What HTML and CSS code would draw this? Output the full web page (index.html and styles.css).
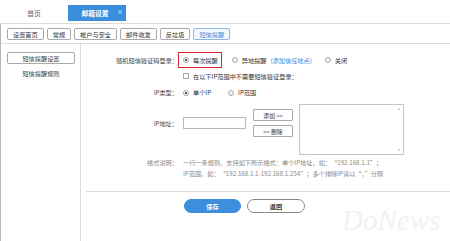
FILE: index.html
```html
<!DOCTYPE html>
<html lang="zh">
<head>
<meta charset="utf-8">
<link rel="stylesheet" href="styles.css">
</head>
<body>
<div class="page">
  <div class="tabs">
    <div class="tab">首页</div>
    <div class="tab active">邮箱设置<span class="close">×</span></div>
  </div>
  <div class="frame">
    <div class="subnav">
      <span class="sbtn">设置首页</span>
      <span class="sbtn">常规</span>
      <span class="sbtn">帐户与安全</span>
      <span class="sbtn">邮件收发</span>
      <span class="sbtn">反垃圾</span>
      <span class="sbtn on">短信提醒</span>
    </div>
    <div class="body">
      <aside class="side">
        <div class="side-btn">短信提醒设置</div>
        <div class="side-link">短信提醒规则</div>
      </aside>
      <main class="main">
        <div class="row r1">
          <div class="lbl">随机短信验证码登录：</div>
          <div class="val">
            <span class="hl"><span class="radio checked"></span>每次提醒</span>
            <span class="opt o2"><span class="radio"></span>异地提醒</span>
            <span class="link">(添加信任地点)</span>
            <span class="opt o3"><span class="radio"></span>关闭</span>
          </div>
        </div>
        <div class="row r2">
          <div class="lbl"></div>
          <div class="val pad"><span class="check"></span>在以下IP范围中不需要短信验证登录：</div>
        </div>
        <div class="row r3">
          <div class="lbl">IP类型：</div>
          <div class="val pad">
            <span class="opt"><span class="radio checked"></span>单个IP</span>
            <span class="opt o4"><span class="radio"></span>IP范围</span>
          </div>
        </div>
        <div class="row r4">
          <div class="lbl ip-lbl">IP地址：</div>
          <div class="val pad ipval">
            <div class="ipinput"></div>
            <div class="ipbtns">
              <div class="smbtn">添加 &gt;&gt;</div>
              <div class="smbtn">&lt;&lt; 删除</div>
            </div>
            <div class="tarea"><div class="sbar"><span class="up"></span><span class="down"></span></div></div>
          </div>
        </div>
        <div class="row r5">
          <div class="lbl">格式说明：</div>
          <div class="val pad note">一行一条规则，支持如下所示格式：单个IP地址，如：“192.168.1.1”；<br>IP范围，如：“192.168.1.1-192.168.1.254”；多个排除IP请以“，”分隔</div>
        </div>
        <div class="sep"></div>
        <div class="actions">
          <span class="btn primary">保存</span>
          <span class="btn">返回</span>
        </div>
        <div class="watermark">DoNews</div>
      </main>
    </div>
  </div>
</div>
</body>
</html>
```
FILE: styles.css
```css
html, body {
  margin: 0;
  padding: 0;
  background: #fff;
}
body {
  width: 450px;
  height: 241px;
  overflow: hidden;
  font-family: "Noto Sans CJK SC", "Liberation Sans", sans-serif;
  font-size: 6.2px;
  color: #333;
}
.page {
  display: flex;
  flex-direction: column;
  height: 241px;
}
.tabs {
  height: 23px;
  border-bottom: 1px solid #dcdcdc;
  display: flex;
  align-items: flex-start;
  box-sizing: content-box;
}
.tab {
  width: 68px;
  height: 16px;
  margin-top: 5px;
  display: flex;
  align-items: center;
  justify-content: center;
  font-size: 6.8px;
  color: #666;
}
.tab.active {
  width: 58px;
  background: #3a8fdc;
  color: #fff;
  font-weight: bold;
  position: relative;
  padding-right: 4px;
  box-sizing: border-box;
}
.close {
  position: absolute;
  right: 3px;
  top: 4px;
  font-size: 6px;
  font-weight: normal;
  line-height: 6px;
}
.frame {
  flex: 1;
  border-left: 1px solid #b5b5b5;
  display: flex;
  flex-direction: column;
}
.subnav {
  border-bottom: 1px solid #dcdcdc;
  display: flex;
  gap: 3px;
  padding: 4px 0 0 6px;
  box-sizing: content-box;
  height: 15px;
  align-items: flex-start;
}
.sbtn {
  height: 12px;
  padding: 0 5px;
  border: 1px solid #a9a9a9;
  border-radius: 2px;
  box-sizing: border-box;
  display: flex;
  align-items: center;
  color: #333;
  background: #fff;
  white-space: nowrap;
}
.sbtn.on {
  border-color: #8bb8e2;
  color: #4a8fd6;
  background: #f4f9ff;
}
.body {
  flex: 1;
  display: flex;
}
.side {
  width: 79px;
  border-right: 1px solid #dcdcdc;
  display: flex;
  flex-direction: column;
  align-items: flex-start;
}
.side-btn {
  margin: 8px 0 0 6px;
  width: 68px;
  height: 12px;
  border: 1px solid #a9a9a9;
  border-radius: 2px;
  box-sizing: border-box;
  display: flex;
  align-items: center;
  justify-content: center;
  color: #444;
}
.side-link {
  margin: 4px 0 0 6px;
  width: 68px;
  line-height: 12px;
  text-align: center;
  color: #444;
}
.main {
  flex: 1;
  position: relative;
  padding-top: 8px;
  display: flex;
  flex-direction: column;
}
.row {
  display: grid;
  grid-template-columns: 97px 1fr;
}
.lbl {
  text-align: right;
  color: #444;
  display: flex;
  align-items: center;
  justify-content: flex-end;
  white-space: nowrap;
}
.val {
  display: flex;
  align-items: center;
  white-space: nowrap;
}
.pad {
  padding-left: 5px;
}
.r1 { height: 16px; }
.r2 { height: 16px; }
.r3 { height: 17px; }
.r4 { margin-top: 3px; height: 51px; }
.hl {
  display: flex;
  align-items: center;
  height: 16px;
  border: 1px solid #d8262e;
  box-sizing: border-box;
  padding: 0 3px 0 4px;
  white-space: nowrap;
}
.opt {
  display: flex;
  align-items: center;
  white-space: nowrap;
}
.o2 { margin-left: 10px; }
.o3 { margin-left: 13px; }
.o4 { margin-left: 17px; }
.link {
  margin-left: 4px;
  color: #3b8ad8;
}
.radio {
  width: 6px;
  height: 6px;
  border: 1px solid #aaa;
  border-radius: 50%;
  box-sizing: border-box;
  margin-right: 4px;
  background: #f4f4f4;
  display: flex;
  align-items: center;
  justify-content: center;
  flex: none;
}
.radio.checked::after {
  content: "";
  width: 2px;
  height: 2px;
  border-radius: 50%;
  background: #333;
}
.check {
  width: 6px;
  height: 6px;
  border: 1px solid #aaa;
  box-sizing: border-box;
  margin-right: 4px;
  background: #fafafa;
  flex: none;
}
.ip-lbl {
  align-items: flex-start;
  padding-top: 15px;
  line-height: 10px;
  height: 10px;
}
.ipval {
  align-items: flex-start;
}
.ipinput {
  margin-top: 13px;
  width: 63px;
  height: 12px;
  border: 1px solid #b8b8b8;
  box-sizing: border-box;
}
.ipbtns {
  margin: 5px 0 0 7px;
  display: flex;
  flex-direction: column;
  gap: 4px;
}
.smbtn {
  width: 40px;
  height: 12px;
  border: 1px solid #a9a9a9;
  border-radius: 1px;
  box-sizing: border-box;
  display: flex;
  align-items: center;
  justify-content: center;
  font-size: 5.8px;
  color: #333;
}
.tarea {
  margin-left: 6px;
  width: 105px;
  height: 51px;
  border: 1px solid #c4c4c4;
  box-sizing: border-box;
  display: flex;
  justify-content: flex-end;
}
.sbar {
  width: 8px;
  display: flex;
  flex-direction: column;
  justify-content: space-between;
  align-items: center;
  padding: 3px 0;
}
.up, .down {
  width: 0;
  height: 0;
  border-left: 1.5px solid transparent;
  border-right: 1.5px solid transparent;
}
.up { border-bottom: 2px solid #aaa; }
.down { border-top: 2px solid #aaa; }
.r5 {
  margin-top: 2px;
}
.r5 .lbl {
  align-items: flex-start;
  line-height: 11px;
  color: #888;
}
.note {
  display: block;
  line-height: 11px;
  color: #888;
}
.sep {
  margin: 12px 0 0 5px;
  border-top: 1px solid #dcdcdc;
}
.actions {
  margin: 7px 0 0 103px;
  display: flex;
  gap: 6px;
}
.btn {
  width: 58px;
  height: 14px;
  border: 1px solid #8a8a8a;
  border-radius: 7px;
  box-sizing: border-box;
  display: flex;
  align-items: center;
  justify-content: center;
  font-weight: bold;
  color: #333;
}
.btn.primary {
  width: 57px;
  background: #3d8fdd;
  border-color: #3d8fdd;
  color: #fff;
}
.watermark {
  position: absolute;
  left: 261px;
  top: 160px;
  font-family: "Liberation Serif", serif;
  font-style: italic;
  font-size: 29px;
  line-height: 32px;
  color: #f1f1f1;
  pointer-events: none;
}
```
